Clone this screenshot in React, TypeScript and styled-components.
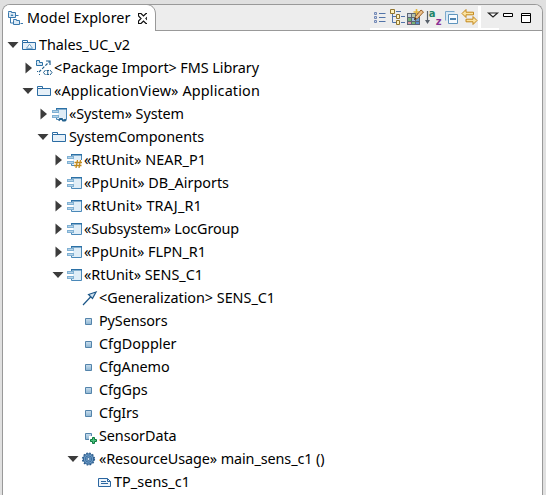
import React, { useLayoutEffect, useRef, useState } from "react";
import styled, { createGlobalStyle } from "styled-components";

const Global = createGlobalStyle`
  * { box-sizing: border-box; }
  body { margin: 0; background: #e0e0e0; overflow: hidden; font-family: "Noto Sans", "Open Sans", sans-serif; }
`;

const View = styled.div`
  width: 546px;
  height: 495px;
  padding: 4px 2px 0 2px;
  background: #e0e0e0;
  overflow: hidden;
`;
const Panel = styled.section`
  width: 541px;
  height: 500px;
  display: flex;
  flex-direction: column;
  background: #fff;
  border: 1px solid #999;
  border-width: 1px 1px 0 1px;
  border-radius: 8px 8px 0 0;
  overflow: hidden;
`;
const Header = styled.header`
  flex: none;
  display: flex;
  height: 26px;
  background: #ededed;
`;
const Tab = styled.div`
  display: flex;
  align-items: center;
  width: 144px;
  padding-left: 5px;
  background: #fff;
`;
const TabIcon = styled.svg`
  flex: none;
  display: block;
  width: 16px;
  height: 16px;
  margin: 0 3px 0 0;
`;
const TabEdge = styled.svg`
  flex: none;
  width: 9px;
  height: 26px;
  display: block;
`;
const Close = styled.svg`
  flex: none;
  display: block;
  width: 11px;
  height: 11px;
  margin-left: 7px;
`;
const Toolbar = styled.div`
  flex: 1;
  display: flex;
  justify-content: flex-end;
  border-bottom: 1px solid #999;
  background: linear-gradient(#fff, #fff) 214px 23px / 129px 2px no-repeat;
`;
const Actions = styled.div`
  display: flex;
  gap: 2px;
  width: 108px;
  padding: 4px 0 0 2px;
`;
const Controls = styled.div`
  display: flex;
  align-items: flex-start;
  gap: 4px;
  width: 61px;
  padding: 7px 0 0 6px;
`;
const Divider = styled.div`
  width: 3px;
  height: 23px;
  margin-top: 1px;
  background: #fff;
`;
const Svg = styled.svg`
  display: block;
  flex: none;
  overflow: visible;
`;
const Tree = styled.div`
  display: flex;
  flex-direction: column;
  padding-top: 2px;
`;
const Row = styled.div<{ $depth: number }>`
  display: flex;
  align-items: center;
  height: 23px;
  padding-left: ${(p) => 3 + p.$depth * 15}px;
`;
const Arrow = styled.svg`
  flex: none;
  width: 14px;
  height: 14px;
  margin-right: 1px;
`;
const IconBox = styled.span`
  flex: none;
  width: 18px;
  height: 16px;
`;
const Text = styled.span`
  font-size: 14.4px;
  line-height: 20px;
  white-space: pre;
  color: #000;
`;

function Label({ text, width }: { text: string; width: number }) {
  const ref = useRef<HTMLSpanElement>(null);
  const [spacing, setSpacing] = useState(0);
  useLayoutEffect(() => {
    const range = document.createRange();
    range.selectNodeContents(ref.current!);
    const natural = range.getBoundingClientRect().width;
    setSpacing((s) => s + (width - natural) / text.length);
  }, [text, width]);
  return <Text ref={ref} style={{ letterSpacing: spacing }}>{text}</Text>;
}

type Kind = "model" | "import" | "folder" | "system" | "protected" | "component" | "generalization" | "property" | "added" | "gear" | "comment";

const Folder = () => (
  <>
    <path d="M1.5 5.5v-2h5v2" fill="#fff" stroke="#2b6ca3" />
    <path d="M1.5 5.5h13v7h-13z" fill="#e6f0f8" stroke="#2b6ca3" />
  </>
);
const Component = () => (
  <>
    <path d="M5.500 2.500h10v11h-10z" fill="#dfedf7" stroke="#4a88b8" />
    <path d="M5 2h11v1.500H5z" fill="#2b70a5" />
    <path d="M1 4h6v8H1z" fill="#fff" />
    <path d="M1 4h7v3H1zM1 9h7v3H1z" fill="#7fb0d3" />
    <path d="M2 5h5v1H2zM2 10h5v1H2z" fill="#b5d2e7" />
  </>
);

function NodeIcon({ kind }: { kind: Kind }) {
  return (
    <Svg width="16" height="16" viewBox="0 0 16 16">
      {kind === "folder" && <Folder />}
      {kind === "model" && (<><Folder /><path d="M5.500 11.300L8.500 7.200l3 4.100z" fill="#fff" stroke="#5b94c0" strokeWidth=".9" /></>)}
      {kind === "import" && (
        <>
          <path d="M.5 2.500v-2h3v2h3v3h-6z" fill="#d9e9f4" stroke="#2b70a5" />
          <path d="M3 12L13.500 1.500" stroke="#24628f" strokeWidth="1.200" strokeDasharray="3 1.500" />
          <path d="M10 1h4v4" fill="none" stroke="#24628f" strokeWidth="1.200" />
          <path d="M1 11.500h1M3 14.500h1" stroke="#24628f" />
          <path d="M9.500 10L7.500 12.500l2 2.500M14 10l2 2.500-2 2.500M10.500 10.500h2.500M11.750 10.500v4M10.500 14.500h2.500" fill="none" stroke="#24628f" />
        </>
      )}
      {(kind === "component" || kind === "system" || kind === "protected") && <Component />}
      {kind === "system" && (<><path d="M7 12h6v3H7z" fill="#fff" /><path d="M7.500 14.500l1.500-1.500h2l1 1.500h2l1-1" fill="none" stroke="#24628f" strokeWidth="1.800" /></>)}
      {kind === "protected" && (<><path d="M8 8h8.500v8H8z" fill="#fff" /><path d="M11.500 8L10 16M14.500 8L13 16M8.500 10.500H16M8 13.500h7.500" stroke="#c08a1e" strokeWidth="1.300" /></>)}
      {kind === "generalization" && <path d="M2 15L10 6.500M7.500 4.500L15 2l-3.500 6.500z" fill="#cfe2f1" stroke="#1d5788" strokeWidth="1.200" />}
      {(kind === "property" || kind === "added") && (
        <>
          <defs><linearGradient id="cell" x2="0" y2="1"><stop stopColor="#cbdfee" /><stop offset="1" stopColor="#8db5d2" /></linearGradient></defs>
          <path d="M4.500 5.500h6v6h-6z" fill="url(#cell)" stroke="#5484ab" />
        </>
      )}
      {kind === "added" && (<><path d="M8 8h8v8H8z" fill="#fff" /><path d="M11.500 9.500h2v2h2v2h-2v2h-2v-2h-2v-2h2z" fill="#4cc07c" stroke="#0d7a40" /></>)}
      {kind === "gear" && (
        <>
          <circle cx="7.500" cy="8" r="5.200" fill="#6d9bc6" stroke="#2a5c8e" strokeWidth="1" />
          <circle cx="7.500" cy="8" r="5.900" fill="none" stroke="#2a5c8e" strokeWidth="1.400" strokeDasharray="1.700 1.390" />
          <circle cx="7.500" cy="8" r="3.200" fill="none" stroke="#376b9e" strokeWidth=".9" />
          <circle cx="7.500" cy="8" r="1.500" fill="#d3e3f1" stroke="#2a5c8e" strokeWidth=".8" />
        </>
      )}
      {kind === "comment" && (<><path d="M2.500 4.500h9l3 3v5h-12z" fill="#edf4fb" stroke="#2b66a0" /><path d="M11.500 4.500v3h3M5 7.500h5M5 9.500h7" fill="none" stroke="#2b66a0" /></>)}
    </Svg>
  );
}

const ListIcon = () => (
  <Svg width="16" height="16">
    <path d="M7 4.500h6.500M7 8.500h6.500M7 12.500h6.500" stroke="#5274a8" strokeWidth="1.200" />
    <path d="M2.500 3.500h2v2h-2zM2.500 7.500h2v2h-2zM2.500 11.500h2v2h-2z" fill="#cbd9ee" stroke="#7489b4" />
  </Svg>
);
const HierarchyIcon = () => (
  <Svg width="16" height="16">
    <path d="M2.500 5v8.500H6M2.500 7.500H6M6 2.500h5M11 7.500h4M11 13.500h4" fill="none" stroke="#5274a8" />
    <path d="M.5.500h4v4h-4zM6.500 5.500h3v4h-3zM6.500 11.500h3v4h-3z" fill="#fff3bd" stroke="#91742e" />
  </Svg>
);
const CustomizeIcon = () => (
  <Svg width="16" height="16">
    <path d="M-1 4h13v12H-1z" fill="#5d6673" />
    <path d="M0 5h3v3H0z" fill="#c5cfd8" />
    <path d="M4 5h3v3H4z" fill="#b5c4a8" />
    <path d="M0 9h3v3H0z" fill="#7ab279" />
    <path d="M4 9h3v3H4z" fill="#9cc3e0" />
    <path d="M8 9h3v3H8z" fill="#6e9ed1" />
    <path d="M0 13h3v2H0z" fill="#de9aa5" />
    <path d="M4 13h3v2H4z" fill="#79b573" />
    <path d="M8 13h3v2H8z" fill="#5a8acb" />
    <path d="M8.500 0v6M5.500 3h6" stroke="#e5b73c" strokeWidth="1.600" />
    <path d="M6.500 10.500l1-3L13 1l2.500 2-6 6.500z" fill="#ecc08a" stroke="#9a6128" />
    <path d="M6 11l1-2.500 1.500 1.500z" fill="#222" />
  </Svg>
);
const Glyph = styled.text`
  font-family: "DejaVu Sans", sans-serif;
  font-weight: 700;
  font-size: 10px;
`;
const SortIcon = () => (
  <Svg width="16" height="16">
    <path d="M1.500 2v11" stroke="#57606a" strokeWidth="1.200" />
    <path d="M-1 11h5l-2.500 4z" fill="#57606a" />
    <Glyph x="2.800" y="7.500" fill="#218569">a</Glyph>
    <Glyph x="9.800" y="15.500" fill="#8b3094">z</Glyph>
  </Svg>
);
const CollapseIcon = () => (
  <Svg width="16" height="16">
    <path d="M1.500 11.500v-9h9" fill="none" stroke="#7ba9cc" />
    <path d="M2 3h9v9H2z" fill="#d9e9f5" />
    <path d="M4.500 5.500h9v9h-9z" fill="#f7fbff" stroke="#5f95bd" />
    <path d="M6 10h6" stroke="#155b94" strokeWidth="1.600" />
  </Svg>
);
const LinkIcon = () => (
  <Svg width="16" height="16">
    <path d="M0 4.500l4-4v2.700h7.500v2.600H4v2.700zM15 11.500l-4-4v2.700H4v2.600h7v2.700z" fill="#fbe3a0" stroke="#c48618" strokeLinejoin="round" />
  </Svg>
);

type Item = [depth: number, arrow: "open" | "shut" | "", kind: Kind, text: string, width: number];
const items: Item[] = [
  [0, "open", "model", "Thales_UC_v2", 91],
  [1, "shut", "import", "<Package Import> FMS Library", 205],
  [1, "open", "folder", "«ApplicationView» Application", 206],
  [2, "shut", "system", "«System» System", 115],
  [2, "open", "folder", "SystemComponents", 135],
  [3, "shut", "protected", "«RtUnit» NEAR_P1", 122],
  [3, "shut", "component", "«PpUnit» DB_Airports", 145],
  [3, "shut", "component", "«RtUnit» TRAJ_R1", 118],
  [3, "shut", "component", "«Subsystem» LocGroup", 155],
  [3, "shut", "component", "«PpUnit» FLPN_R1", 122],
  [3, "open", "component", "«RtUnit» SENS_C1", 119],
  [4, "", "generalization", "<Generalization> SENS_C1", 176],
  [4, "", "property", "PySensors", 68.5],
  [4, "", "property", "CfgDoppler", 77.5],
  [4, "", "property", "CfgAnemo", 70.5],
  [4, "", "property", "CfgGps", 48.5],
  [4, "", "property", "CfgIrs", 39.5],
  [4, "", "added", "SensorData", 77.5],
  [4, "open", "gear", "«ResourceUsage» main_sens_c1 ()", 225.5],
  [5, "", "comment", "TP_sens_c1", 76],
];

export default function App() {
  return (
    <View>
      <Global />
      <Panel>
        <Header>
          <Tab>
            <TabIcon viewBox="0 0 16 16">
              <path d="M.5 2.500v-1h3v1h4v5h-7z" fill="#dceaf5" stroke="#3b79ad" />
              <path d="M2.500 6L4 4l1.500 2z" fill="#3b79ad" />
              <path d="M2.500 8v5H5M8 5.500h2.500" fill="none" stroke="#3b79ad" />
              <path d="M5.500 10.500v-1h3v1h3v4h-6z" fill="#dceaf5" stroke="#3b79ad" />
              <path d="M12.500 13.500H15" stroke="#3b79ad" />
            </TabIcon>
            <Label text="Model Explorer" width={103.5} />
            <Close viewBox="0 0 11 11">
              <path d="M.5.500h2.500L5.500 3 8 .5h2.500V3L8 5.500 10.500 8v2.500H8L5.500 8 3 10.500H.5V8L3 5.500.5 3z" fill="#fff" stroke="#111" strokeWidth="1.200" />
            </Close>
          </Tab>
          <TabEdge viewBox="0 0 9 26">
            <path d="M0 0c5 .5 8 4 8 9v17H0z" fill="#fff" />
            <path d="M0-.5c5 .5 8.500 4 8.500 9.500v17" fill="none" stroke="#999" />
          </TabEdge>
          <Toolbar>
            <Actions>
              <ListIcon />
              <HierarchyIcon />
              <CustomizeIcon />
              <SortIcon />
              <CollapseIcon />
              <LinkIcon />
            </Actions>
            <Divider />
            <Controls>
              <Svg width="12" height="11"><path d="M1.500 1h9L6 5z" fill="#fff" stroke="#222" strokeWidth="1.200" /></Svg>
              <Svg width="12" height="11"><path d="M.5 1.500h9v3h-9z" fill="#fff" stroke="#000" /></Svg>
              <Svg width="14" height="11"><path d="M2.500 1.500h9v9h-9z" fill="#fff" stroke="#000" /><path d="M2.500 3.500h9" stroke="#000" /></Svg>
            </Controls>
          </Toolbar>
        </Header>
        <Tree>
          {items.map(([depth, arrow, kind, text, width]) => (
            <Row key={text} $depth={depth}>
              <Arrow viewBox="0 0 14 14">
                {arrow === "open" && <path d="M1.500 4h11L7 10z" fill="#3c3c3c" />}
                {arrow === "shut" && <path d="M4.500 1.500v11L11 7z" fill="#3c3c3c" />}
              </Arrow>
              <IconBox><NodeIcon kind={kind} /></IconBox>
              <Label text={text} width={width} />
            </Row>
          ))}
        </Tree>
      </Panel>
    </View>
  );
}
